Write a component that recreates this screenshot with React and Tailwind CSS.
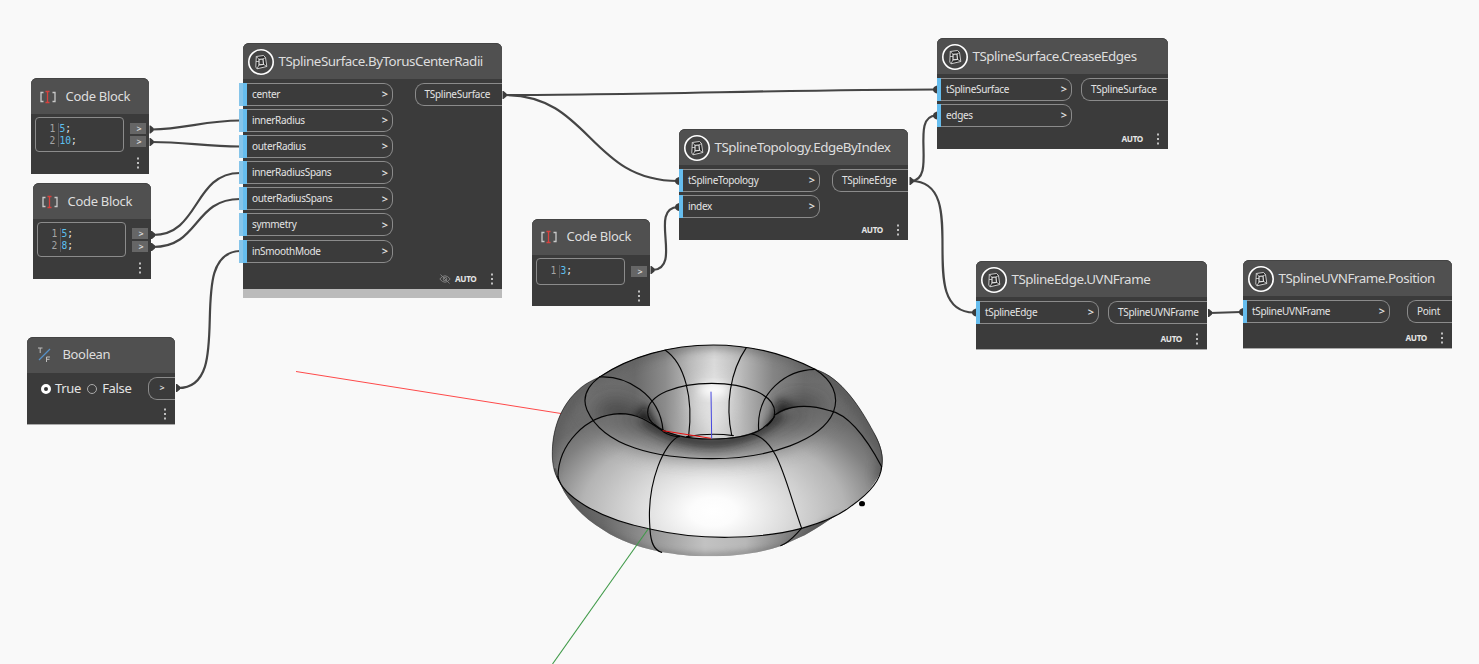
const OUTLINE =
  "M520 30 C640 30 745 62 825 103 C905 125 965 225 1000 290 C1034 345 1036 395 1012 430 C985 478 950 502 905 530 C870 552 815 592 780 607 L725 632 C660 655 580 664 510 664 C450 664 410 658 360 650 C290 635 240 618 190 585 C130 550 85 500 62 450 C42 415 36 385 37 350 C38 270 70 205 115 165 C135 145 160 135 180 125 C270 65 390 30 520 30 Z";

function Torus() {
  return (
    <svg className="absolute top-[335px] left-[540px] h-[230px] w-[360px]" viewBox="0 0 1080 690" fill="none">
      <defs>
        <clipPath id="body"><path d={OUTLINE} /></clipPath>
        <clipPath id="upper">
          <path d="M0 0 H825 V103 C875 135 900 180 880 227 C800 205 740 212 700 250 C680 285 600 312 515 312 C440 312 390 300 345 270 C300 235 230 225 150 258 C128 190 140 150 180 125 L0 125 Z" />
        </clipPath>
        <clipPath id="under">
          <path d="M0 350 H37 L54 425 C65 480 170 550 330 582 C480 618 660 613 785 580 C850 562 900 540 935 512 L1080 700 H0 Z" />
        </clipPath>
        <radialGradient id="front" gradientUnits="userSpaceOnUse" cx="0" cy="0" r="1" gradientTransform="translate(520 530) scale(580 360)">
          <stop offset="0" stopColor="#fff" />
          <stop offset="0.12" stopColor="#fcfcfc" />
          <stop offset="0.38" stopColor="#dcdcdc" />
          <stop offset="0.68" stopColor="#b4b4b4" />
          <stop offset="0.88" stopColor="#808080" />
          <stop offset="1" stopColor="#6c6c6c" />
        </radialGradient>
        <linearGradient id="back" gradientUnits="userSpaceOnUse" x1="130" y1="0" x2="900" y2="0">
          <stop offset="0" stopColor="#707070" />
          <stop offset="0.2" stopColor="#6a6a6a" />
          <stop offset="0.32" stopColor="#8c8c8c" />
          <stop offset="0.42" stopColor="#bcbcbc" />
          <stop offset="0.51" stopColor="#dadada" />
          <stop offset="0.61" stopColor="#bcbcbc" />
          <stop offset="0.74" stopColor="#848484" />
          <stop offset="0.86" stopColor="#6c6c6c" />
          <stop offset="1" stopColor="#707070" />
        </linearGradient>
        <linearGradient id="belly" gradientUnits="userSpaceOnUse" x1="60" y1="0" x2="930" y2="0">
          <stop offset="0" stopColor="#555" />
          <stop offset="0.15" stopColor="#6a6a6a" />
          <stop offset="0.32" stopColor="#979797" />
          <stop offset="0.5" stopColor="#c2c2c2" />
          <stop offset="0.64" stopColor="#b8b8b8" />
          <stop offset="0.8" stopColor="#7c7c7c" />
          <stop offset="0.9" stopColor="#555" />
          <stop offset="1" stopColor="#505050" />
        </linearGradient>
        <filter id="b8" x="-50%" y="-50%" width="200%" height="200%"><feGaussianBlur stdDeviation="9" /></filter>
        <filter id="b14" x="-50%" y="-50%" width="200%" height="200%"><feGaussianBlur stdDeviation="14" /></filter>
        <filter id="b24" x="-50%" y="-50%" width="200%" height="200%"><feGaussianBlur stdDeviation="26" /></filter>
      </defs>
      <g clipPath="url(#body)">
        <rect width="1080" height="690" fill="url(#front)" />
        <path d="M20 440 Q20 230 180 120" stroke="#555" strokeWidth="36" opacity="0.6" filter="url(#b14)" />
        <path d="M830 100 Q960 180 1035 350 L1025 440" stroke="#555" strokeWidth="46" opacity="0.7" filter="url(#b14)" />
        <path d="M120 200 Q200 378 515 378 Q820 378 900 200 L790 210 Q640 320 515 320 Q390 315 260 210 Z" fill="#6c6c6c" opacity="0.65" filter="url(#b24)" />
        <path d="M310 250 Q390 318 515 322 Q640 318 725 235" stroke="#1c1c1c" strokeWidth="28" opacity="0.85" filter="url(#b14)" />
        <path d="M260 240 Q370 310 515 325 Q660 310 790 225" stroke="#2a2a2a" strokeWidth="40" opacity="0.45" filter="url(#b24)" />
        <rect y="400" width="1080" height="290" fill="url(#belly)" clipPath="url(#under)" />
        <path d="M60 470 Q140 595 350 652 Q510 680 725 640 L900 545" stroke="#555" strokeWidth="14" opacity="0.55" filter="url(#b8)" />
        <g clipPath="url(#upper)">
          <rect width="1080" height="340" fill="url(#back)" />
          <path d="M150 140 Q330 30 520 26 Q720 30 850 115" stroke="#5c5c5c" strokeWidth="30" opacity="0.6" filter="url(#b14)" />
          <ellipse cx="515" cy="200" rx="60" ry="80" fill="#eee" opacity="0.5" filter="url(#b24)" />
          <ellipse cx="522" cy="165" rx="44" ry="18" fill="#fff" filter="url(#b14)" />
          <path d="M190 200 Q290 180 345 290 L280 290 Q230 250 160 250 Z" fill="#333" opacity="0.6" filter="url(#b24)" />
          <path d="M318 200 Q325 260 385 300 L270 280 Z" fill="#0c0c0c" opacity="0.85" filter="url(#b14)" />
          <path d="M715 190 Q710 250 650 300 L780 230 Z" fill="#0c0c0c" opacity="0.85" filter="url(#b14)" />
          <path d="M720 200 Q790 170 860 210 L720 270 Z" fill="#333" opacity="0.6" filter="url(#b24)" />
        </g>
      </g>
      <g stroke="#050505" strokeWidth="3.4" strokeLinecap="round">
        <path d="M1024 400 C1032 370 1025 335 1000 290 C965 225 905 125 825 103" strokeOpacity="0.75" strokeWidth="2.2" />
        <path d="M180 125 C160 135 135 145 115 165 C70 205 38 270 37 350 C36 385 42 415 56 437" strokeOpacity="0.75" strokeWidth="2.2" />
        <path d="M180 125 C270 65 390 30 520 30 C640 30 745 62 825 103" />
        <path d="M180 125 C140 155 126 190 141 225 C190 335 350 371 515 371 C690 371 845 315 880 232 C900 180 875 135 825 103" />
        <path d="M345 270 C327 258 323 245 323 232 C323 180 410 145 515 145 C620 145 704 180 704 232 C704 248 695 262 680 273" />
        <path d="M345 270 C385 302 450 312 515 312 C570 312 620 305 655 288 C680 275 690 262 704 245" />
        <path d="M375 45 C435 85 460 190 446 303" />
        <path d="M619 38 C570 110 556 210 575 300" />
        <path d="M180 126 C255 122 360 175 369 286" />
        <path d="M825 103 C740 105 648 170 656 285" />
        <path d="M54 425 C55 330 135 240 240 236 C295 236 330 262 370 290 C385 300 400 304 418 305" />
        <path d="M1025 395 C985 320 930 240 870 227 C800 205 740 212 704 240" />
        <path d="M418 304 C375 320 318 440 330 582 C332 620 340 645 365 652" />
        <path d="M635 297 C715 312 735 440 785 580 C765 600 750 622 722 632" />
        <path d="M54 425 C65 480 170 550 330 582 C480 618 660 613 785 580 C850 562 900 540 935 512 C980 480 1022 440 1025 395" />
        <path d="M440 305 Q515 292 580 302" />
      </g>
      <path d="M368 287 L513 310" stroke="#e11" strokeWidth="3" />
      <path d="M513 170 L515 310" stroke="#4646e0" strokeWidth="3" />
      <ellipse cx="966" cy="506" rx="9" ry="8" fill="#000" />
    </svg>
  );
}

const WIRES = [
  "M152 129.500 C185 129 205 120.500 240 120.500",
  "M152 142 C185 142 205 146.500 240 146.500",
  "M153 235 C200 235 193 173 240 173",
  "M153 247 C200 247 193 199 240 199",
  "M178 388 C238 388 182 253 240 251",
  "M505 95 C640 95 800 89.500 936 89.500",
  "M505 95 C590 95 590 181 678 181",
  "M653 270 C683 268 648 208 678 207",
  "M911 181 C938 180 909 116 936 115.500",
  "M911 181 C974 181 911 312 974 312.500",
  "M1210 313 L1241 312",
];
const OUTS = [[148.5, 129.5], [148.5, 142], [150, 235], [150, 247], [175, 388], [501.5, 95], [649.5, 270], [908.5, 181], [1207, 313]];
const INS = [[937, 89.5], [937, 115.5], [679, 181], [679, 207], [976, 312.5], [1243, 312]];

function Wires() {
  return (
    <svg className="absolute inset-0 h-[664px] w-[1479px]" fill="none">
      <path d="M296 371.500 L561 413.500" stroke="#ff4a4a" />
      {WIRES.map((d) => <path key={d} d={d} stroke="#454545" strokeWidth="2.2" />)}
      {OUTS.map(([x, y]) => <path key={x + "o" + y} d={`M${x + 1} ${y - 4} l1 0 l3 2.500 v3 l-3 2.500 l-1 0 z`} fill="#3c3c3c" />)}
      {INS.map(([x, y]) => <path key={x + "i" + y} d={`M${x} ${y - 4} q-4 1 -4 4 q0 3 4 4 z`} fill="#3c3c3c" />)}
    </svg>
  );
}

function SplineIcon() {
  return (
    <svg className="h-[28px] w-[28px] shrink-0" viewBox="0 0 28 28" fill="none">
      <circle cx="14" cy="14" r="12.200" fill="#444" stroke="#fff" strokeWidth="1.600" />
      <g stroke="#dcdcdc" strokeLinejoin="round">
        <path d="M9.300 8.500 L16.500 7.500 L18.500 9.500 L19.800 18.500 L10 20.800 L8.800 19 Z" fill="#262626" strokeWidth="0.900" />
        <path d="M12 11.300 L16 11 L16.500 16.300 L12 16.800 Z" fill="#3a3a3a" strokeWidth="1.200" />
        <path d="M9.300 8.500 L12 11.300 M16 11 L18.500 9.500 M16.500 16.300 L19.800 18.500 M12 16.800 L10 20.800 M9 13.500 H12" strokeWidth="0.800" />
      </g>
    </svg>
  );
}

function Dots({ className }) {
  return (
    <svg className={`h-[12px] w-[4px] shrink-0 ${className}`} fill="#c0c0c0">
      <rect x="1" y="0.500" width="2" height="2" /><rect x="1" y="5" width="2" height="2" /><rect x="1" y="9.500" width="2" height="2" />
    </svg>
  );
}

function Input({ label, extended }) {
  return (
    <div className="flex h-[23px] items-stretch">
      {extended && <div className="w-[4px] bg-[#86c5ea]" />}
      <div className="w-[4px] bg-[#66bdee]" />
      <div className="flex grow items-center justify-between rounded-r-[9px] border border-l-0 border-[#8b8b8b] pr-[4px] pl-[5px] text-[10px] text-[#e4e4e4]">
        <span className="tracking-[-0.32px]">{label}</span>
        <span className="text-[11px] font-semibold">&gt;</span>
      </div>
    </div>
  );
}

function Output({ label, className }) {
  return (
    <div className={`flex h-[23px] items-center rounded-l-[9px] border border-r-0 border-[#8b8b8b] pl-[9px] text-[10px] tracking-[-0.28px] whitespace-nowrap text-[#e4e4e4] ${className}`}>
      {label}
    </div>
  );
}

function Header({ children, className }) {
  return (
    <div className={`flex h-[36px] shrink-0 items-center rounded-t-[6px] border-t border-[#444] bg-[#505050] whitespace-nowrap text-[#dedede] ${className}`}>
      {children}
    </div>
  );
}

function SurfaceNode({ className, title, inputs, inWidth, output, outWidth, extended, bottom }) {
  return (
    <section className={`absolute flex flex-col ${className}`}>
      <div className={`flex grow flex-col rounded-t-[6px] bg-[#3b3b3b] ${bottom}`}>
        <Header className="gap-[4px] pl-[3.5px]">
          <SplineIcon />
          <h2 className="text-[13.4px] tracking-[-0.48px]">{title}</h2>
        </Header>
        <div className="flex items-start justify-between pt-[4px]">
          <div className={`flex flex-col gap-[3.1px] ${inWidth}`}>
            {inputs.map((i) => <Input key={i} label={i} extended={extended} />)}
          </div>
          <Output label={output} className={outWidth} />
        </div>
        <div className="mt-auto flex h-[20px] items-center justify-end pr-[8px]">
          {extended && (
            <svg className="mr-[4px] h-[10px] w-[12px]" viewBox="0 0 12 10" fill="none" stroke="#858585" strokeWidth="0.900">
              <path d="M0.800 5 Q6 -1.500 11.200 5 Q6 11.500 0.800 5 Z M1.500 0.500 L10.500 9.500" /><circle cx="6" cy="5" r="1.800" />
            </svg>
          )}
          <span className="text-[8.2px] font-bold tracking-[-0.35px] text-[#e6e6e6]">AUTO</span>
          <Dots className="ml-[13px]" />
        </div>
      </div>
      {extended && <div className="h-[9px] shrink-0 bg-[#bbb]" />}
    </section>
  );
}

function CodeNode({ className, lines, editor }) {
  return (
    <section className={`absolute flex w-[118px] flex-col rounded-t-[6px] bg-[#3b3b3b] ${className}`}>
      <Header className="pl-[9px]">
        <svg className="h-[14px] w-[16px]" viewBox="0 0 16 14" fill="none">
          <path d="M3.500 2.500 H1 V11.500 H3.500 M12.500 2.500 H15 V11.500 H12.500" stroke="#c8c8c8" strokeWidth="1.300" />
          <path d="M5.500 1.500 H9.500 M7.500 1.500 V12.500 M5.500 12.500 H9.500" stroke="#d8403c" strokeWidth="1.300" />
        </svg>
        <h2 className="ml-[10px] text-[13px] tracking-[-0.3px]">Code Block</h2>
      </Header>
      <div className="flex justify-between pt-[3px] pr-[3px] pl-[4px]">
        <div className={`flex w-[89px] flex-col justify-center rounded-[4px] border border-[#8b8b8b] pt-[1px] pl-[14px] font-['DejaVu_Sans_Mono',monospace] text-[9.6px] leading-[12.3px] ${editor}`}>
          {lines.map((l, i) => (
            <div key={i} className="flex">
              <span className="w-[9px] border-r border-[#5c5c5c] text-[#a5a5a5]">{i + 1}</span>
              <span className="pl-[1px] text-[#5cc0f0]">{l}<span className="text-[#e8e8e8]">;</span></span>
            </div>
          ))}
        </div>
        <div className="flex flex-col justify-center gap-[1.5px] pt-[1px]">
          {lines.map((l, i) => (
            <div key={i} className="flex h-[11px] w-[16px] items-center justify-center bg-[#666] pl-[3px] text-[9px] leading-none font-semibold text-[#ddd]">&gt;</div>
          ))}
        </div>
      </div>
      <Dots className="mt-auto mb-[4.5px] ml-[105px]" />
    </section>
  );
}

export default function App() {
  return (
    <main className="relative h-[664px] w-[1479px] overflow-hidden bg-[#f9f9f9] font-['Noto_Sans',sans-serif]">
      <Wires />
      <Torus />
      <svg className="absolute top-[528px] left-[552px] h-[136px] w-[98px]" fill="none">
        <path d="M96.500 0.500 L0.500 136" stroke="#3f9a48" strokeWidth="1.100" />
      </svg>
      <CodeNode className="top-[78px] left-[30.5px] h-[95.5px]" lines={["5", "10"]} editor="h-[35px]" />
      <CodeNode className="top-[183px] left-[32.5px] h-[95.5px]" lines={["5", "8"]} editor="h-[35px]" />
      <CodeNode className="top-[218.5px] left-[531.5px] h-[87.5px]" lines={["3"]} editor="h-[27px]" />
      <SurfaceNode className="top-[43px] left-[243px] h-[255px] w-[258.5px]" title="TSplineSurface.ByTorusCenterRadii" inputs={["center", "innerRadius", "outerRadius", "innerRadiusSpans", "outerRadiusSpans", "symmetry", "inSmoothMode"]} inWidth="w-[154px] -ml-[4px]" output="TSplineSurface" outWidth="w-[87px]" extended bottom="" />
      <SurfaceNode className="top-[129px] left-[679px] h-[111px] w-[229px]" title="TSplineTopology.EdgeByIndex" inputs={["tSplineTopology", "index"]} inWidth="w-[141px]" output="TSplineEdge" outWidth="w-[76px]" bottom="" />
      <SurfaceNode className="top-[38px] left-[937px] h-[111px] w-[231px]" title="TSplineSurface.CreaseEdges" inputs={["tSplineSurface", "edges"]} inWidth="w-[135px]" output="TSplineSurface" outWidth="w-[87px]" bottom="" />
      <SurfaceNode className="top-[261px] left-[976px] h-[89px] w-[231px]" title="TSplineEdge.UVNFrame" inputs={["tSplineEdge"]} inWidth="w-[123px]" output="TSplineUVNFrame" outWidth="w-[99px]" bottom="border-b border-[#aaa]" />
      <SurfaceNode className="top-[260px] left-[1243px] h-[89px] w-[209px]" title="TSplineUVNFrame.Position" inputs={["tSplineUVNFrame"]} inWidth="w-[147px]" output="Point" outWidth="w-[45px]" bottom="border-b border-[#aaa]" />
      <section className="absolute top-[336.5px] left-[27px] flex h-[88px] w-[148px] flex-col rounded-t-[6px] border-b border-[#aaa] bg-[#3b3b3b]">
        <Header className="pl-[10px]">
          <svg className="h-[18px] w-[16px]" viewBox="0 0 16 18" fill="none">
            <path d="M2 14 L13 3" stroke="#5590c8" strokeWidth="1.200" />
            <path d="M1 2 H5.500 M3.200 2 V7 M9.500 16 V11 H13 M9.500 13.300 H12.500" stroke="#bdbdbd" />
          </svg>
          <h2 className="ml-[9.500px] text-[13px] tracking-[-0.35px]">Boolean</h2>
        </Header>
        <div className="flex items-center justify-between pt-[4px] pl-[14px]">
          <div className="flex items-center pt-[1px] text-[13px] tracking-[-0.3px] text-[#e4e4e4]">
            <span className="h-[10px] w-[10px] rounded-full border-[3px] border-white bg-[#333]" />
            <span className="ml-[4px]">True</span>
            <span className="ml-[6px] h-[10px] w-[10px] rounded-full border border-[#aaa]" />
            <span className="ml-[5px]">False</span>
          </div>
          <div className="flex h-[23px] w-[27px] items-center justify-center rounded-l-[9px] border border-r-0 border-[#8b8b8b] text-[9px] font-semibold text-[#ddd]">&gt;</div>
        </div>
        <Dots className="mt-auto mb-[4px] ml-[136px]" />
      </section>
    </main>
  );
}
